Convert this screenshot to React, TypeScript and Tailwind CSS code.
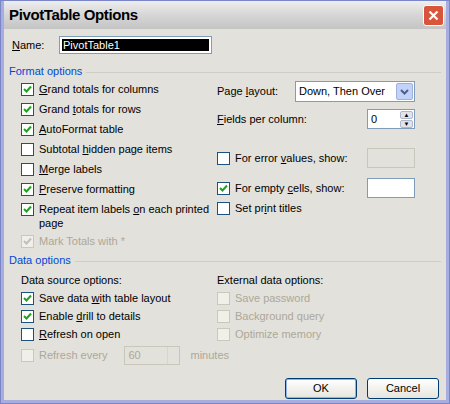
const font = { fontFamily: '"Liberation Sans", Arial, sans-serif' }

function Box({ checked, disabled }: { checked?: boolean; disabled?: boolean }) {
  return (
    <span
      className={`w-[13px] h-[13px] shrink-0 border flex items-center justify-center ${disabled ? 'border-[#cac8bb] bg-[#f0efe8]' : 'border-[#1c5180] bg-white'}`}
    >
      {checked && (
        <svg width="9" height="9" viewBox="0 0 9 9">
          <path d="M1 4 L3.5 6.5 L8 1.5" fill="none" stroke={disabled ? '#c0c0b8' : '#21a121'} strokeWidth="2" />
        </svg>
      )}
    </span>
  )
}

function Check({ label, checked, disabled, h = 'h-[20px]' }: { label: React.ReactNode; checked?: boolean; disabled?: boolean; h?: string }) {
  return (
    <div className={`flex items-start gap-[5px] ${h} ${disabled ? 'text-[#aca899]' : 'text-black'}`}>
      <span className="mt-[1px]"><Box checked={checked} disabled={disabled} /></span>
      <span className="leading-[14px]">{label}</span>
    </div>
  )
}

const U = ({ c }: { c: string }) => <span className="underline">{c}</span>

function Section({ title }: { title: string }) {
  return (
    <div className="flex items-center gap-1 h-[16px]">
      <span className="text-[#0046d5]">{title}</span>
      <span className="flex-1 border-t border-[#cfcdc4] mt-[2px]" />
    </div>
  )
}

function Spin() {
  return (
    <span className="w-[15px] flex flex-col gap-[1px] p-[1px]">
      <span className="h-[8px] bg-[#e2e3ea] border border-[#b0b6cb] rounded-[2px] text-[6px] leading-[6px] text-center">▲</span>
      <span className="h-[8px] bg-[#e2e3ea] border border-[#b0b6cb] rounded-[2px] text-[6px] leading-[6px] text-center">▼</span>
    </span>
  )
}

export default function App() {
  return (
    <div style={font} className="w-[450px] h-[404px] text-[11px] bg-[#7b86c8] p-[1px]">
      <div className="h-full border-[3px] border-[#a8acdf] border-t-0 bg-[#e3e1db] flex flex-col">
        <div className="h-[28px] flex items-center justify-between pl-[5px] pr-[2px] bg-gradient-to-b from-[#eeeeee] via-[#d6d6d6] to-[#c4c4c4]">
          <span className="text-[15px] font-bold text-black tracking-tight">PivotTable Options</span>
          <span className="w-[21px] h-[21px] rounded-[3px] bg-[#d8553c] border border-white flex items-center justify-center">
            <svg width="11" height="11" viewBox="0 0 11 11"><path d="M1.5 1.5 L9.5 9.5 M9.5 1.5 L1.5 9.5" stroke="white" strokeWidth="2.2" /></svg>
          </span>
        </div>
        <div className="flex-1 px-[5px] pt-[7px] flex flex-col">
          <div className="flex items-center h-[18px] pl-[3px]">
            <span className="w-[47px]"><U c="N" />ame:</span>
            <span className="w-[153px] h-[18px] border border-[#7f9db9] bg-white p-[2px]">
              <span className="block h-full bg-black text-white leading-[12px] pl-[1px]">PivotTable1</span>
            </span>
          </div>
          <div className="mt-[9px]"><Section title="Format options" /></div>
          <div className="flex pl-[12px] pt-[3px]">
            <div className="w-[196px]">
              <Check checked label={<><U c="G" />rand totals for columns</>} />
              <Check checked label={<>Grand <U c="t" />otals for rows</>} />
              <Check checked label={<><U c="A" />utoFormat table</>} />
              <Check label={<>Subtotal <U c="h" />idden page items</>} />
              <Check label={<><U c="M" />erge labels</>} />
              <Check checked label={<><U c="P" />reserve formatting</>} />
              <Check checked h="h-[32px]" label={<>Repeat item labels <U c="o" />n each printed<br />page</>} />
              <Check checked disabled h="h-[18px]" label="Mark Totals with *" />
            </div>
            <div className="w-[199px]">
              <div className="flex items-center h-[21px] -mt-[1px]">
                <span className="w-[78px]">Page <U c="l" />ayout:</span>
                <span className="w-[120px] h-[21px] border border-[#7f9db9] bg-white flex items-center justify-between pl-[3px] pr-[1px]">
                  Down, Then Over
                  <span className="w-[17px] h-[17px] bg-[#c1d3fb] border border-[#a0b0d8] rounded-[2px] flex items-center justify-center">
                    <svg width="9" height="6" viewBox="0 0 9 6"><path d="M1 1 L4.5 4.5 L8 1" stroke="#4d6185" strokeWidth="2" fill="none" /></svg>
                  </span>
                </span>
              </div>
              <div className="flex items-center h-[20px] mt-[7px]">
                <span className="w-[150px]"><U c="F" />ields per column:</span>
                <span className="w-[48px] h-[20px] border border-[#7f9db9] bg-white flex items-center justify-between pl-[3px]">0<Spin /></span>
              </div>
              <div className="flex items-center justify-between h-[20px] mt-[19px] pr-[1px]">
                <Check h="" label={<>For error <U c="v" />alues, show:</>} />
                <span className="w-[48px] h-[20px] border border-[#c9c7ba] bg-[#e3e1db]" />
              </div>
              <div className="flex items-center justify-between h-[20px] mt-[10px] pr-[1px]">
                <Check checked h="" label={<>For empty <U c="c" />ells, show:</>} />
                <span className="w-[48px] h-[20px] border border-[#7f9db9] bg-white" />
              </div>
              <div className="mt-[3px]"><Check label={<>Set pr<U c="i" />nt titles</>} /></div>
            </div>
          </div>
          <Section title="Data options" />
          <div className="flex pl-[12px] pt-[4px]">
            <div className="w-[196px]">
              <div className="h-[19px]">Data source options:</div>
              <Check checked h="h-[18px]" label={<>Save data <U c="w" />ith table layout</>} />
              <Check checked h="h-[18px]" label={<>Enable <U c="d" />rill to details</>} />
              <Check h="h-[18px]" label={<><U c="R" />efresh on open</>} />
            </div>
            <div>
              <div className="h-[19px]">External data options:</div>
              <Check disabled h="h-[18px]" label="Save password" />
              <Check disabled h="h-[18px]" label="Background query" />
              <Check disabled h="h-[18px]" label="Optimize memory" />
            </div>
          </div>
          <div className="flex items-center pl-[12px] h-[20px] text-[#aca899]">
            <Check disabled h="" label="Refresh every" />
            <span className="ml-[17px] w-[56px] h-[19px] border border-[#c9c7ba] flex items-center justify-between pl-[3px]">60<span className="w-[12px] h-full border-l border-[#d8d6cc]" /></span>
            <span className="ml-[10px]">minutes</span>
          </div>
          <div className="flex justify-end gap-[10px] mt-[13px] pr-[2px]">
            <button className="w-[72px] h-[21px] border border-[#003c74] rounded-[3px] bg-gradient-to-b from-white to-[#e6e5dd] shadow-[inset_0_0_0_1px_#8eb4f0]">OK</button>
            <button className="w-[72px] h-[21px] border border-[#003c74] rounded-[3px] bg-gradient-to-b from-white to-[#e6e5dd]">Cancel</button>
          </div>
        </div>
      </div>
    </div>
  )
}
